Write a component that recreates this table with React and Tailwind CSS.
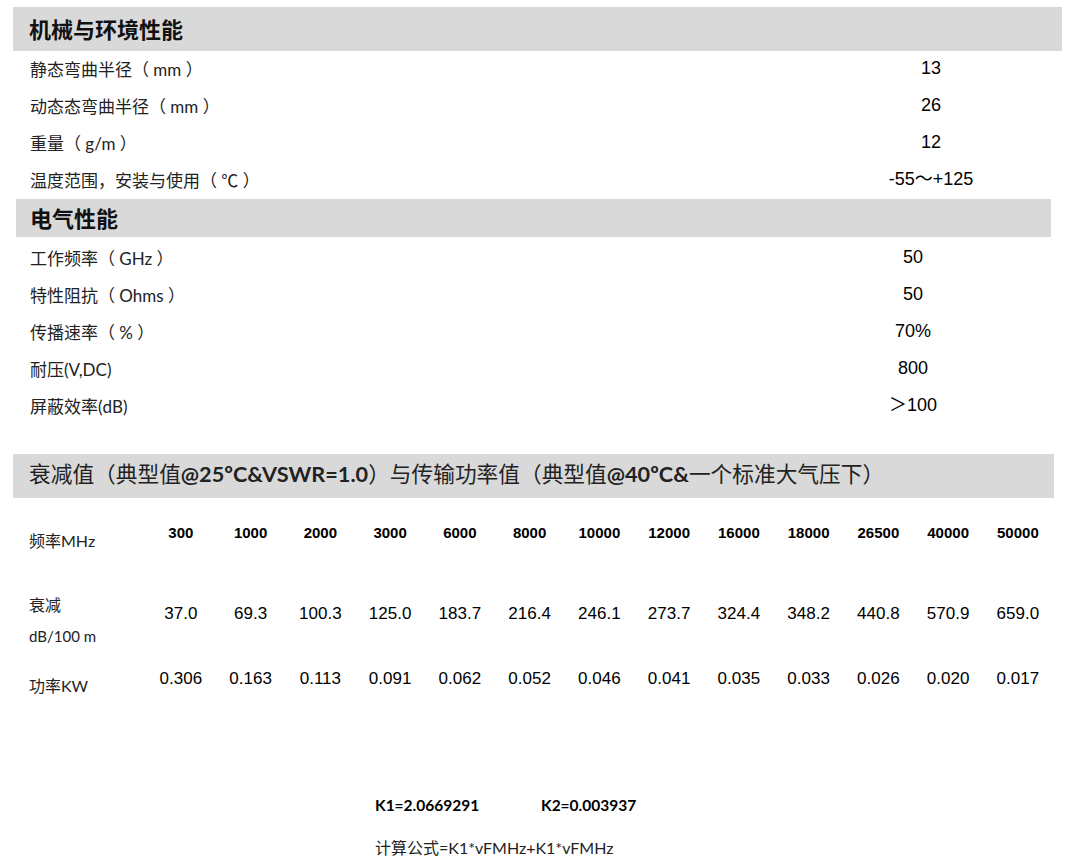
const mech = [
  ['静态弯曲半径（ mm ）', '13'],
  ['动态态弯曲半径（ mm ）', '26'],
  ['重量（ g/m ）', '12'],
  ['温度范围，安装与使用（ ℃ ）', '-55～+125'],
];

const elec = [
  ['工作频率（ GHz ）', '50'],
  ['特性阻抗（ Ohms ）', '50'],
  ['传播速率（ % ）', '70%'],
  ['耐压(V,DC)', '800'],
  ['屏蔽效率(dB)', '＞100'],
];

const freqs = ['300', '1000', '2000', '3000', '6000', '8000', '10000', '12000', '16000', '18000', '26500', '40000', '50000'];
const atten = ['37.0', '69.3', '100.3', '125.0', '183.7', '216.4', '246.1', '273.7', '324.4', '348.2', '440.8', '570.9', '659.0'];
const power = ['0.306', '0.163', '0.113', '0.091', '0.062', '0.052', '0.046', '0.041', '0.035', '0.033', '0.026', '0.020', '0.017'];

const cjk = "font-['Lato','Noto_Sans_CJK_SC',sans-serif]";
const arial = "font-['Liberation_Sans','Noto_Sans_CJK_SC',sans-serif]";

const Header = ({ className, children }) => (
  <div className={`bg-[#d9d9d9] flex items-center pl-[16px] text-[22px] font-bold text-[#111] ${cjk} ${className}`}>
    {children}
  </div>
);

export default function App() {
  return (
    <div className="w-[1080px] h-[865px] bg-white text-[#222] overflow-hidden">
      {/* 机械与环境性能 */}
      <Header className="mt-[7px] ml-[13px] w-[1049px] h-[44px]">机械与环境性能</Header>
      <div className="pl-[30px]">
        {mech.map(([label, value]) => (
          <div key={label} className="h-[37px] flex items-center">
            <div className={`w-[801px] text-[17px] ${cjk}`}>{label}</div>
            <div className={`w-[200px] -mt-[3px] text-center text-[18px] text-black ${arial}`}>{value}</div>
          </div>
        ))}
      </div>

      {/* 电气性能 */}
      <Header className="ml-[16px] w-[1035px] h-[38px] !pl-[14px]">电气性能</Header>
      <div className="pl-[30px] pt-[3px]">
        {elec.map(([label, value]) => (
          <div key={label} className="h-[37px] flex items-center">
            <div className={`w-[783px] text-[17px] ${cjk}`}>{label}</div>
            <div className={`w-[200px] -mt-[3px] text-center text-[18px] text-black ${arial}`}>{value}</div>
          </div>
        ))}
      </div>

      {/* 衰减值 */}
      <div className={`mt-[29px] ml-[13px] w-[1041px] h-[44px] bg-[#d9d9d9] flex items-center pl-[16px] pb-[3px] text-[21.7px] text-[#222] ${cjk}`}>
        衰减值（典型值<span className="font-bold">@25ºC&amp;VSWR=1.0</span>）与传输功率值（典型值<span className="font-bold">@40ºC&amp;</span>一个标准大气压下）
      </div>

      <div className="pl-[29px]">
        <div className="grid grid-cols-[117px_repeat(13,69.75px)] h-[74px]">
          <div className={`pt-[33px] text-[16px] leading-[20px] ${cjk}`}>频率MHz</div>
          {freqs.map((f) => (
            <div key={f} className={`pt-[25px] text-center text-[15px] leading-[20px] font-bold text-black ${arial}`}>{f}</div>
          ))}
        </div>
        <div className="grid grid-cols-[117px_repeat(13,69.75px)] h-[80px]">
          <div className={`pt-[23px] ${cjk}`}>
            <div className="text-[16px] leading-[20px]">衰减</div>
            <div className="mt-[11px] text-[15px] leading-[20px]">dB/100 m</div>
          </div>
          {atten.map((v) => (
            <div key={v} className={`pt-[31px] text-center text-[17px] leading-[22px] text-black ${arial}`}>{v}</div>
          ))}
        </div>
        <div className="grid grid-cols-[117px_repeat(13,69.75px)] h-[60px]">
          <div className={`pt-[24px] text-[16px] leading-[20px] ${cjk}`}>功率KW</div>
          {power.map((v, i) => (
            <div key={i} className={`pt-[16px] text-center text-[17px] leading-[22px] text-black ${arial}`}>{v}</div>
          ))}
        </div>
      </div>

      {/* K values */}
      <div className={`mt-[82px] pl-[375px] flex text-[15.5px] leading-[22px] font-bold text-black ${cjk}`}>
        <span className="w-[166px]">K1=2.0669291</span>
        <span>K2=0.003937</span>
      </div>
      <div className={`mt-[21px] pl-[375px] text-[16px] leading-[22px] ${cjk}`}>
        计算公式=K1*vFMHz+K1*vFMHz
      </div>
    </div>
  );
}
